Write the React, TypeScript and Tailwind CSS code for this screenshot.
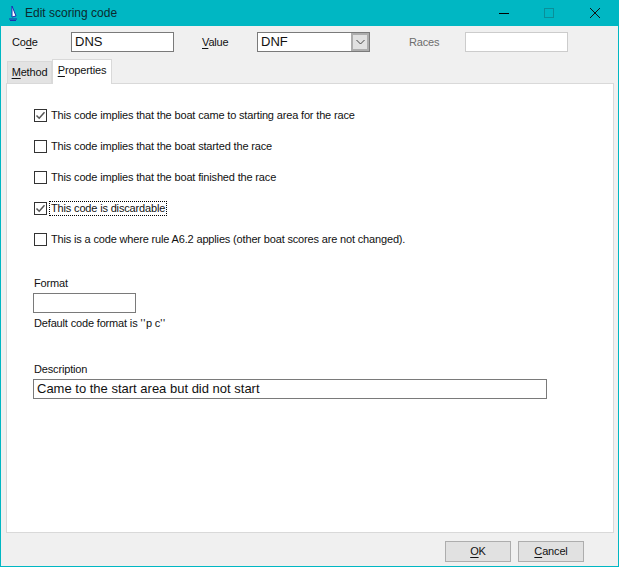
import type { ReactNode } from 'react'

const CHECKS = [
  { label: 'This code implies that the boat came to starting area for the race', checked: true },
  { label: 'This code implies that the boat started the race', checked: false },
  { label: 'This code implies that the boat finished the race', checked: false },
  { label: 'This code is discardable', checked: true, focused: true },
  { label: 'This is a code where rule A6.2 applies (other boat scores are not changed).', checked: false },
]

function Checkbox({ label, checked, focused }: { label: string; checked: boolean; focused?: boolean }) {
  return (
    <div className="flex h-[15px] items-center">
      <span className="flex h-[13px] w-[13px] shrink-0 items-center justify-center border border-[#333] bg-white">
        {checked && (
          <svg width="11" height="11" viewBox="0 0 11 11" fill="none">
            <path d="M1.5 5.5 L4.2 8.2 L9.5 2.2" stroke="#555" strokeWidth="1.5" />
          </svg>
        )}
      </span>
      <span
        className={`ml-[3px] whitespace-nowrap px-px leading-[13px] ${
          focused ? 'outline-1 outline-dotted outline-black' : ''
        }`}
      >
        {label}
      </span>
    </div>
  )
}

function TextBox({ value, className }: { value?: string; className: string }) {
  return (
    <div
      className={`flex h-[20px] items-center border border-[#7a7a7a] bg-white text-[13px] tracking-normal text-[#111] ${className}`}
    >
      {value}
    </div>
  )
}

function Key({ children }: { children: ReactNode }) {
  return <span className="underline underline-offset-2">{children}</span>
}

export default function App() {
  return (
    <div className="flex h-[567px] w-[619px] flex-col border-x border-b border-[#00b7c3] bg-[#f0f0f0] font-['Liberation_Sans',sans-serif] text-[11px] tracking-[-0.16px] text-[#111]">
      {/* title bar */}
      <div className="-mx-px flex h-[26px] shrink-0 items-center bg-[#00b7c3]">
        <svg className="ml-[7px]" width="12" height="16" viewBox="0 0 12 16" fill="none">
          <path d="M5 1 L5 12 L9 11 Z" fill="#fff" stroke="#1a2fb0" strokeWidth="1" />
          <path d="M2 14 H10 M3 15.5 H9" stroke="#1a2fb0" strokeWidth="1" />
        </svg>
        <span className="ml-[6px] text-[12px] tracking-normal text-[#0b2a2e]">Edit scoring code</span>
        <div className="ml-auto flex items-center">
          <div className="mr-[35px] h-px w-[10px] bg-black" />
          <div className="mr-[36px] h-[10px] w-[10px] border border-[#0a8f99]" />
          <svg className="mr-[19px]" width="10" height="10" viewBox="0 0 10 10" fill="none">
            <path d="M0 0 L10 10 M10 0 L0 10" stroke="#111" strokeWidth="1" />
          </svg>
        </div>
      </div>

      {/* header fields */}
      <div className="mt-[6px] flex h-[20px] items-center">
        <span className="ml-[11px] w-[59px]">
          Co<Key>d</Key>e
        </span>
        <TextBox value="DNS" className="w-[103px] px-[3px]" />
        <span className="ml-[28px] w-[55px]">
          <Key>V</Key>alue
        </span>
        <div className="flex h-[20px] w-[113px] items-center border border-[#7a7a7a] bg-white pl-[3px] text-[13px] tracking-normal">
          DNF
          <div className="ml-auto flex h-full w-[18px] items-center justify-center border-2 border-[#adadad] bg-[#e1e1e1]">
            <svg width="9" height="6" viewBox="0 0 9 6" fill="none">
              <path d="M0.5 1 L4.5 5 L8.5 1" stroke="#444" strokeWidth="1" />
            </svg>
          </div>
        </div>
        <span className="ml-[39px] w-[56px] text-[#6d6d6d]">Races</span>
        <div className="h-[20px] w-[103px] border border-[#cccccc] bg-white" />
      </div>

      {/* tabs */}
      <div className="mt-[7px] flex h-[24px] items-end pl-[6px]">
        <div className="flex h-[22px] w-[45px] items-center justify-center border border-b-0 border-[#d9d9d9] bg-[#e3e3e3] pb-px">
          <span>
            <Key>M</Key>ethod
          </span>
        </div>
        <div className="relative z-10 -mb-px flex h-[25px] w-[60px] items-center justify-center border border-b-0 border-[#d9d9d9] bg-white pb-[3px]">
          <span>
            <Key>P</Key>roperties
          </span>
        </div>
      </div>

      {/* tab panel */}
      <div className="ml-[5px] mr-[4px] flex h-[450px] flex-col border border-[#d9d9d9] bg-white pl-[27px]">
        <div className="mt-[24px] flex flex-col gap-[16px]">
          {CHECKS.map((c) => (
            <Checkbox key={c.label} label={c.label} checked={c.checked} focused={c.focused} />
          ))}
        </div>
        <span className="mt-[29px] leading-[14px]">Format</span>
        <TextBox className="-ml-px mt-[3px] w-[103px]" />
        <span className="mt-[3px] leading-[14px]">
          Default code format is <span className="tracking-[0.7px]">''</span>p c<span className="tracking-[0.7px]">''</span>
        </span>
        <span className="mt-[32px] leading-[14px]">Description</span>
        <TextBox value="Came to the start area but did not start" className="-ml-px mt-[3px] w-[514px] pl-[3px]" />
      </div>

      {/* buttons */}
      <div className="mt-[8px] flex justify-end gap-[7px] pr-[34px]">
        <div className="flex h-[21px] w-[66px] items-center justify-center border border-[#adadad] bg-[#e1e1e1]">
          <span>
            <Key>O</Key>K
          </span>
        </div>
        <div className="flex h-[21px] w-[66px] items-center justify-center border border-[#adadad] bg-[#e1e1e1]">
          <span>
            <Key>C</Key>ancel
          </span>
        </div>
      </div>
    </div>
  )
}
